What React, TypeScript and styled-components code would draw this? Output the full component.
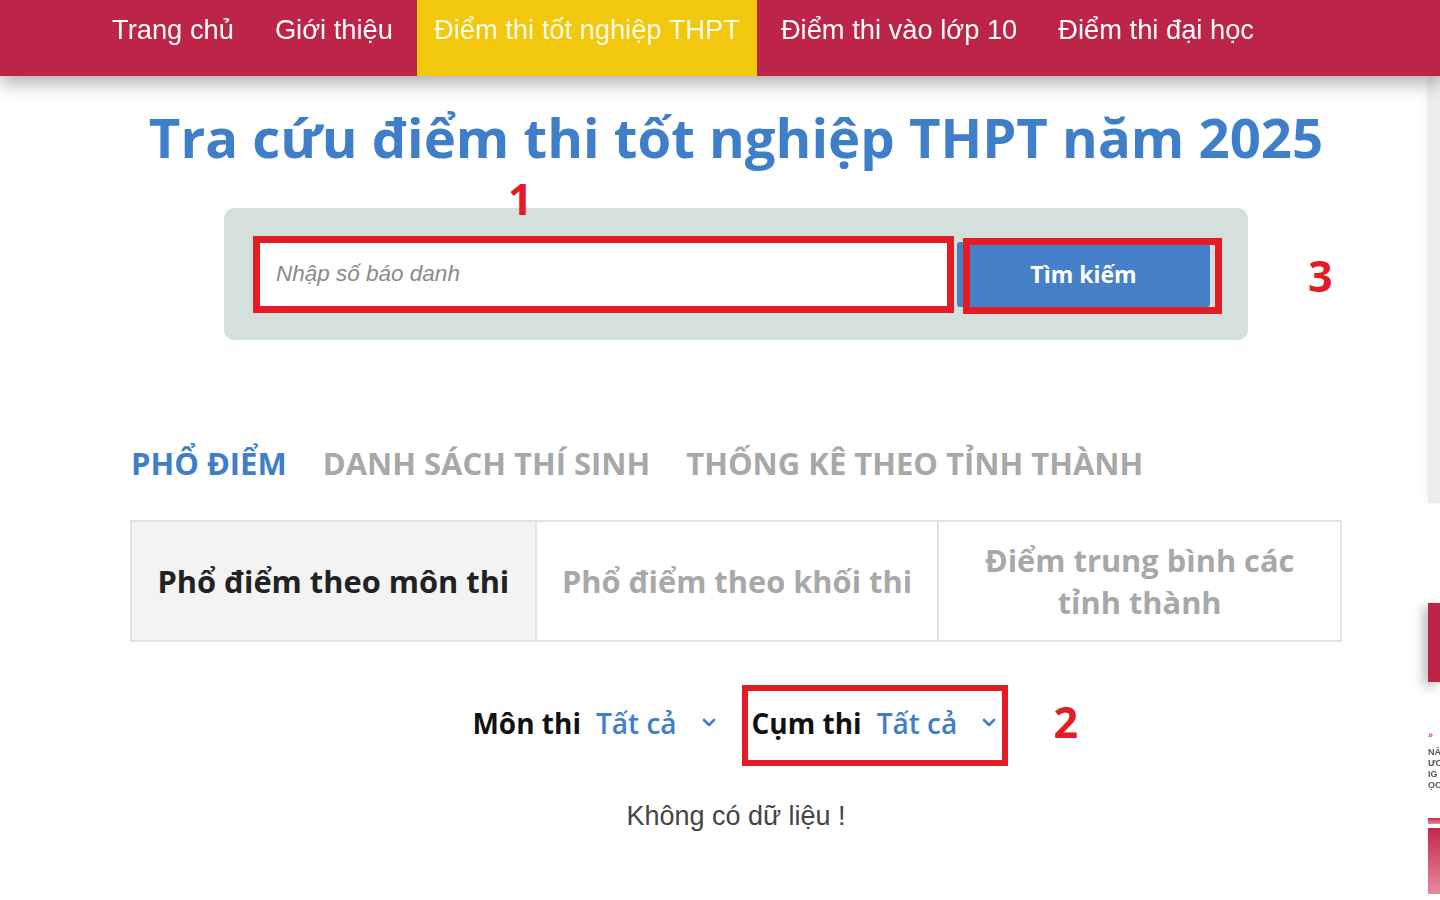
import styled, { createGlobalStyle } from 'styled-components';

const GlobalStyle = createGlobalStyle`
  html, body {
    margin: 0;
    padding: 0;
    background: #fff;
  }
  body {
    font-family: "Open Sans", "Noto Sans", sans-serif;
    overflow: hidden;
  }
  * {
    box-sizing: border-box;
  }
`;

const MARK_RED = '#e31c25';
const BLUE = '#3f7ec8';

const TopNav = styled.nav`
  position: relative;
  z-index: 2;
  display: flex;
  gap: 7px;
  height: 76px;
  padding-left: 95px;
  background: #bc2548;
  box-shadow: 0 7px 18px rgba(0, 0, 0, 0.32);
`;

const NavItem = styled.a<{ $active?: boolean }>`
  display: flex;
  align-items: center;
  padding: 0 17px 16px;
  font-family: "Liberation Sans", Arial, sans-serif;
  font-size: 27.3px;
  color: ${({ $active }) => ($active ? '#fffbe8' : '#fff')};
  background: ${({ $active }) => ($active ? '#f2c80e' : 'transparent')};
  text-decoration: none;
  white-space: nowrap;
`;

const Main = styled.main`
  width: 1212px;
  margin-left: 130px;
`;

const Title = styled.h1`
  margin: 28px 0 0;
  font-size: 54.5px;
  line-height: 66px;
  font-weight: 700;
  color: ${BLUE};
  text-align: center;
  white-space: nowrap;
`;

const SearchRow = styled.div`
  display: flex;
  align-items: center;
  margin-top: 38px;
  padding-left: 94px;
`;

const SearchPanel = styled.div`
  position: relative;
  display: flex;
  align-items: center;
  width: 1024px;
  height: 132px;
  padding-left: 29px;
  border-radius: 10px;
  background: #d3e0dc;
`;

const InputFrame = styled.label`
  display: flex;
  align-items: center;
  width: 701px;
  height: 77px;
  padding-left: 14px;
  background: #fff;
  border: 7px solid ${MARK_RED};
`;

const Input = styled.input`
  width: 100%;
  border: none;
  outline: none;
  background: transparent;
  font-family: "Liberation Sans", Arial, sans-serif;
  font-style: italic;
  font-size: 22.5px;
  color: #333;
  &::placeholder {
    color: #8a8a8a;
  }
`;

const ButtonSlot = styled.div`
  position: relative;
  margin-left: 3px;
`;

const SearchButton = styled.button`
  display: block;
  width: 253px;
  height: 65px;
  border: none;
  border-radius: 3px;
  background: #4580c8;
  color: #fff;
  font-family: "Open Sans", "Noto Sans", sans-serif;
  font-size: 23px;
  font-weight: 700;
`;

const MarkBox = styled.span`
  position: absolute;
  left: 6px;
  top: -4px;
  width: 259px;
  height: 76px;
  border: 7px solid ${MARK_RED};
  pointer-events: none;
`;

const MarkNumber = styled.span`
  font-size: 43px;
  line-height: 1;
  font-weight: 700;
  color: ${MARK_RED};
`;

const FloatingMark = styled(MarkNumber)<{ $left: number; $top: number }>`
  position: absolute;
  left: ${({ $left }) => $left}px;
  top: ${({ $top }) => $top}px;
`;

const RowMark = styled(MarkNumber)`
  margin-left: 60px;
  margin-top: 2px;
`;

const TabBar = styled.div`
  display: flex;
  gap: 36px;
  margin-top: 103px;
  padding-left: 1px;
`;

const Tab = styled.span<{ $active?: boolean }>`
  font-size: 31px;
  line-height: 40px;
  font-weight: 700;
  color: ${({ $active }) => ($active ? BLUE : '#a8a8a8')};
  white-space: nowrap;
`;

const SubTabs = styled.div`
  display: grid;
  grid-template-columns: repeat(3, 1fr);
  margin-top: 37px;
  height: 122px;
  border: 2px solid #e2e2e2;
`;

const SubTab = styled.div<{ $active?: boolean }>`
  display: flex;
  align-items: center;
  justify-content: center;
  padding: 0 24px;
  text-align: center;
  font-size: 30.8px;
  line-height: 42px;
  font-weight: 700;
  color: ${({ $active }) => ($active ? '#222' : '#a8a8a8')};
  background: ${({ $active }) => ($active ? '#f3f3f3' : '#fff')};
  & + & {
    border-left: 2px solid #e2e2e2;
  }
`;

const FilterRow = styled.div`
  display: flex;
  align-items: center;
  justify-content: center;
  gap: 26px;
  margin-top: 43px;
  padding-left: 8px;
`;

const Select = styled.div`
  display: flex;
  align-items: center;
  padding-bottom: 6px;
  font-size: 28px;
  line-height: 38px;
  white-space: nowrap;
`;

const SelectLabel = styled.span`
  font-weight: 700;
  color: #111;
`;

const SelectValue = styled.span`
  margin-left: 15px;
  font-weight: 600;
  color: ${BLUE};
`;

const Chevron = styled.svg`
  margin-left: 25px;
  width: 14px;
  height: 10px;
`;

const FramedSelect = styled.div`
  position: relative;
  display: flex;
  align-items: center;
  width: 266px;
  height: 81px;
  padding-left: 4px;
  border: 6px solid ${MARK_RED};
`;

const EmptyText = styled.p`
  margin: 34px 0 0;
  font-family: "Liberation Sans", Arial, sans-serif;
  font-size: 27px;
  line-height: 32px;
  color: #444;
  text-align: center;
`;

/* right edge: parts of the floating side widgets that stick out of the page */
const SideRail = styled.aside`
  position: fixed;
  top: 76px;
  right: 0;
  display: flex;
  flex-direction: column;
  width: 12px;
`;

const RailTrack = styled.div`
  height: 427px;
  background: #ececec;
  box-shadow: -2px 0 6px rgba(0, 0, 0, 0.06);
`;

const RailTab = styled.div`
  margin-top: 100px;
  height: 79px;
  background: #bc2548;
  box-shadow: -4px 4px 12px rgba(0, 0, 0, 0.3);
`;

const RailNote = styled.div`
  margin-top: 48px;
  overflow: hidden;
  font-family: "Liberation Sans", Arial, sans-serif;
  font-size: 9px;
  line-height: 11px;
  font-weight: 700;
  color: #555;
  white-space: nowrap;
  span {
    display: block;
  }
  span:first-child {
    color: #c44;
    margin-bottom: 6px;
  }
`;

const RailStripe = styled.div<{ $h: number; $gap: number }>`
  margin-top: ${({ $gap }) => $gap}px;
  height: ${({ $h }) => $h}px;
  background: linear-gradient(#c3284c, #e58aa0);
`;

const ChevronIcon = () => (
  <Chevron viewBox="0 0 14 10">
    <path d="M2 2 L7 7 L12 2" fill="none" stroke={BLUE} strokeWidth="2.6" strokeLinecap="round" strokeLinejoin="round" />
  </Chevron>
);

const navLinks = [
  'Trang chủ',
  'Giới thiệu',
  'Điểm thi tốt nghiệp THPT',
  'Điểm thi vào lớp 10',
  'Điểm thi đại học',
];

const App = () => {
  return (
    <>
      <GlobalStyle />
      <TopNav>
        {navLinks.map((link, i) => (
          <NavItem key={link} $active={i === 2}>
            {link}
          </NavItem>
        ))}
      </TopNav>

      <Main>
        <Title>Tra cứu điểm thi tốt nghiệp THPT năm 2025</Title>

        <SearchRow>
          <SearchPanel>
            <FloatingMark $left={284} $top={-31}>1</FloatingMark>
            <InputFrame>
              <Input placeholder="Nhập số báo danh" />
            </InputFrame>
            <ButtonSlot>
              <SearchButton>Tìm kiếm</SearchButton>
              <MarkBox />
            </ButtonSlot>
          </SearchPanel>
          <RowMark>3</RowMark>
        </SearchRow>

        <TabBar>
          <Tab $active>PHỔ ĐIỂM</Tab>
          <Tab>DANH SÁCH THÍ SINH</Tab>
          <Tab>THỐNG KÊ THEO TỈNH THÀNH</Tab>
        </TabBar>

        <SubTabs>
          <SubTab $active>Phổ điểm theo môn thi</SubTab>
          <SubTab>Phổ điểm theo khối thi</SubTab>
          <SubTab>Điểm trung bình các tỉnh thành</SubTab>
        </SubTabs>

        <FilterRow>
          <Select>
            <SelectLabel>Môn thi</SelectLabel>
            <SelectValue>Tất cả</SelectValue>
            <ChevronIcon />
          </Select>
          <FramedSelect>
            <Select>
              <SelectLabel>Cụm thi</SelectLabel>
              <SelectValue>Tất cả</SelectValue>
              <ChevronIcon />
            </Select>
            <FloatingMark $left={306} $top={9}>2</FloatingMark>
          </FramedSelect>
        </FilterRow>

        <EmptyText>Không có dữ liệu !</EmptyText>
      </Main>

      <SideRail>
        <RailTrack />
        <RailTab />
        <RailNote>
          <span>»</span>
          <span>NĂ</span>
          <span>ƯC</span>
          <span>IG</span>
          <span>ỌC</span>
        </RailNote>
        <RailStripe $h={6} $gap={27} />
        <RailStripe $h={66} $gap={4} />
      </SideRail>
    </>
  );
};

export default App;
